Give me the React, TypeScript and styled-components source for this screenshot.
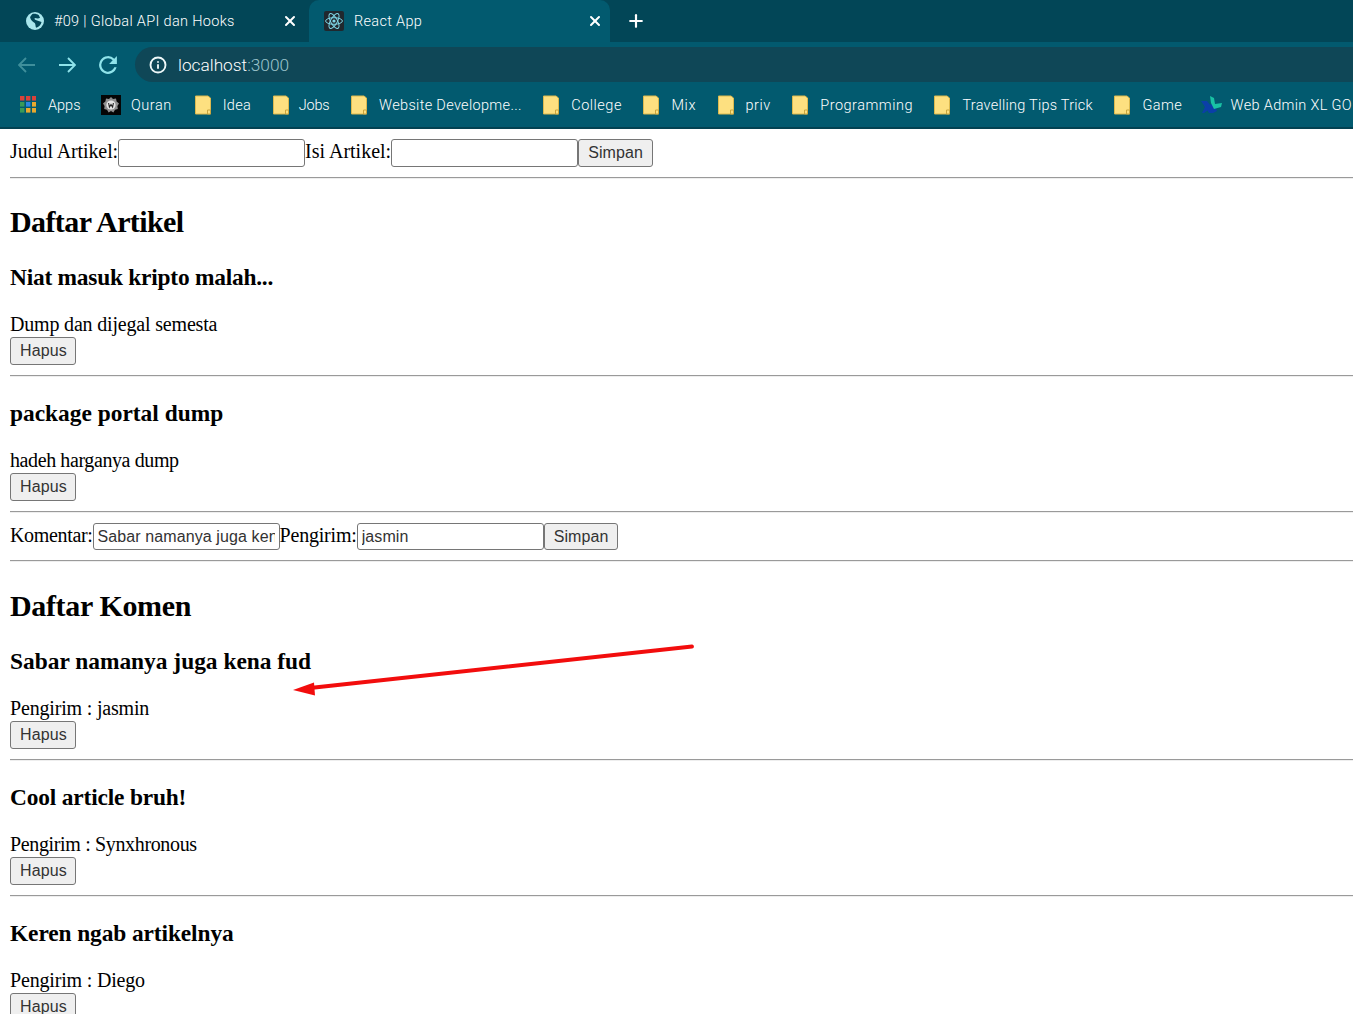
import styled, { createGlobalStyle } from "styled-components";
import { Info, X, Plus } from "lucide-react";

const bookmarkFolders = [
  { name: "Idea", spacing: 0.33, pull: -1.5 },
  { name: "Jobs", spacing: -0.15, gap: 10 },
  { name: "Website Developme...", spacing: 0.33 },
  { name: "College", spacing: 0.5 },
  { name: "Mix", spacing: 0.6 },
  { name: "priv", spacing: 0.5 },
  { name: "Programming", spacing: 0.5 },
  { name: "Travelling Tips Trick", spacing: 0.25 },
  { name: "Game", spacing: 0.4 },
];

const articles = [
  { title: "Niat masuk kripto malah...", body: "Dump dan dijegal semesta", titleSpacing: -0.23, bodySpacing: -0.18 },
  { title: "package portal dump", body: "hadeh harganya dump", titleSpacing: 0, bodySpacing: -0.4 },
];

const comments = [
  { title: "Sabar namanya juga kena fud", body: "Pengirim : jasmin", titleSpacing: 0, bodySpacing: -0.18 },
  { title: "Cool article bruh!", body: "Pengirim : Synxhronous", titleSpacing: -0.17, bodySpacing: -0.35 },
  { title: "Keren ngab artikelnya", body: "Pengirim : Diego", titleSpacing: -0.1, bodySpacing: -0.18 },
];

const GlobeIcon = () => (
  <svg width="18" height="18" viewBox="0 0 18 18">
    <circle cx="9" cy="9" r="9" fill="#a9e6ec" />
    <path
      d="M6 2.2 C8 1.6 10.5 1.8 12 2.8 L13.5 5 C12 6.5 10 6 8.5 6 C7.5 7 9 8 11 8.2 L15.6 9 C15.5 12 13.5 14.5 11 15.6 C10 14 10.2 12.2 9 11 C7 10.5 4.5 8.5 3.6 6 C4 4.6 5 3 6 2.2 Z"
      fill="#024657"
      transform="rotate(8 9 9)"
    />
  </svg>
);

const ReactIcon = () => (
  <svg width="20" height="20" viewBox="0 0 20 20">
    <rect width="20" height="20" rx="2" fill="#20282e" />
    <g fill="none" stroke="#7fd6e6" strokeWidth="1">
      <ellipse cx="10" cy="10" rx="8.4" ry="3.3" />
      <ellipse cx="10" cy="10" rx="8.4" ry="3.3" transform="rotate(60 10 10)" />
      <ellipse cx="10" cy="10" rx="8.4" ry="3.3" transform="rotate(120 10 10)" />
    </g>
    <circle cx="10" cy="10" r="1.6" fill="#7fd6e6" />
  </svg>
);

const AppsIcon = () => {
  const colors = ["#d9423a", "#d9423a", "#d9423a", "#3a9b57", "#2d86e0", "#e8a92e", "#3a9b57", "#e8a92e", "#e8a92e"];
  return (
    <svg width="16" height="17" viewBox="0 0 16 17">
      {colors.map((c, i) => (
        <rect key={i} x={(i % 3) * 6} y={Math.floor(i / 3) * 6} width="4.4" height="4.6" fill={c} />
      ))}
    </svg>
  );
};

const QuranIcon = () => (
  <svg width="20" height="20" viewBox="0 0 20 20">
    <rect width="20" height="20" fill="#050505" />
    <path
      d="M10 2 L12 4 L15 3.6 L15.6 6.6 L18 8.6 L16.4 11 L16.8 14 L14 14.8 L12.4 17.4 L10 16 L7.6 17.4 L6 14.8 L3.2 14 L3.6 11 L2 8.6 L4.4 6.6 L5 3.6 L8 4 Z"
      fill="#8f8f8f"
    />
    <circle cx="10" cy="10" r="4.6" fill="#e4e4e4" />
    <path d="M7.6 8 L8.4 12 L10 9.6 L11.6 12 L12.4 8" fill="none" stroke="#222" strokeWidth="1.1" />
  </svg>
);

const FolderIcon = () => (
  <svg width="16" height="20" viewBox="0 0 16 20">
    <path d="M0.5 1 H13 L15.5 3 V19 H0.5 Z" fill="#fde080" stroke="#dcb94f" />
    <path d="M12.5 15 H15.5 V19 H12.5 Z" fill="#fde080" stroke="#c9a53e" />
  </svg>
);

const XlIcon = () => (
  <svg width="21" height="20" viewBox="0 0 21 20">
    <path d="M0 6 H6 L9 10 L12 8 L16 16 L12 18 H8 L6.5 15.5 L3 18 H1 L4 12 Z" fill="#0b3fa8" />
    <path d="M9 1 L13 3 L14 9 L21 8 L20 12 L13 14 L10 8 Z" fill="#19c2a4" />
  </svg>
);

const ArrowIcon = ({ flip, color }: { flip?: boolean; color: string }) => (
  <svg width="18" height="16" viewBox="0 0 18 16" fill="none" stroke={color} strokeWidth="1.9">
    <path d={flip ? "M17 8 H1 M8 1 L1 8 L8 15" : "M1 8 H17 M10 1 L17 8 L10 15"} />
  </svg>
);

const ReloadIcon = () => (
  <svg width="20" height="20" viewBox="3 3 18 18" fill="#8fe3ea">
    <path d="M17.65 6.35A8 8 0 1 0 19.73 14h-2.08A6 6 0 1 1 12 6c1.66 0 3.14.69 4.22 1.78L13 11h7V4l-2.35 2.35z" />
  </svg>
);

export default function App() {
  return (
    <>
      <GlobalStyle />
      <Browser>
        <TabStrip>
          <InactiveTab>
            <GlobeIcon />
            <TabTitle>#09 | Global API dan Hooks</TabTitle>
            <X size={16} strokeWidth={3} color="#fff" />
          </InactiveTab>
          <ActiveTab>
            <ReactIcon />
            <TabTitle>React App</TabTitle>
            <X size={16} strokeWidth={3} color="#fff" />
          </ActiveTab>
          <NewTab>
            <Plus size={20} strokeWidth={2.6} color="#fff" />
          </NewTab>
        </TabStrip>
        <Toolbar>
          <NavButtons>
            <ArrowIcon flip color="#3f8f9b" />
            <ArrowIcon color="#8fe3ea" />
            <ReloadIcon />
          </NavButtons>
          <Omnibox>
            <Info size={18} color="#eef8f9" strokeWidth={2.5} />
            <Url>
              localhost<UrlPort>:3000</UrlPort>
            </Url>
          </Omnibox>
        </Toolbar>
        <Bookmarks>
          <Bookmark>
            <AppsIcon />
            <BookmarkLabel $spacing={0}>Apps</BookmarkLabel>
          </Bookmark>
          <Bookmark $gap={10} $pull={1}>
            <QuranIcon />
            <BookmarkLabel $spacing={0.5}>Quran</BookmarkLabel>
          </Bookmark>
          {bookmarkFolders.map((f) => (
            <Bookmark key={f.name} $gap={f.gap} $pull={f.pull}>
              <FolderIcon />
              <BookmarkLabel $spacing={f.spacing}>{f.name}</BookmarkLabel>
            </Bookmark>
          ))}
          <Bookmark $gap={9} $pull={3}>
            <XlIcon />
            <BookmarkLabel $spacing={0.33}>Web Admin XL GO</BookmarkLabel>
          </Bookmark>
        </Bookmarks>
      </Browser>

      <Page>
        <FormRow>
          <Label $spacing={-0.1}>Judul Artikel:</Label>
          <TextInput type="text" defaultValue="" />
          <Label $spacing={0}>Isi Artikel:</Label>
          <TextInput type="text" defaultValue="" />
          <ActionButton type="button">Simpan</ActionButton>
        </FormRow>
        <Rule />
        <Heading $spacing={-0.6}>Daftar Artikel</Heading>
        {articles.map((a) => (
          <section key={a.title}>
            <EntryTitle $spacing={a.titleSpacing}>{a.title}</EntryTitle>
            <EntryBody $spacing={a.bodySpacing}>{a.body}</EntryBody>
            <ActionButton type="button">Hapus</ActionButton>
            <Rule />
          </section>
        ))}
        <FormRow $offset={0.4}>
          <Label $spacing={-0.33}>Komentar:</Label>
          <TextInput type="text" defaultValue="Sabar namanya juga kena fud" />
          <Label $spacing={-0.2}>Pengirim:</Label>
          <TextInput type="text" defaultValue="jasmin" />
          <ActionButton type="button">Simpan</ActionButton>
        </FormRow>
        <Rule />
        <Heading $spacing={-0.35} $top={26.6} $bottom={24.8}>Daftar Komen</Heading>
        {comments.map((c) => (
          <section key={c.title}>
            <EntryTitle $spacing={c.titleSpacing}>{c.title}</EntryTitle>
            <EntryBody $spacing={c.bodySpacing}>{c.body}</EntryBody>
            <ActionButton type="button">Hapus</ActionButton>
            <Rule />
          </section>
        ))}
      </Page>

      <Arrow width="410" height="56" viewBox="0 0 410 56">
        <path d="M402 2.5 L20 44" stroke="#f20d0d" strokeWidth="3.8" strokeLinecap="round" fill="none" />
        <path d="M3 46 L24 38.5 L25 51.5 Z" fill="#f20d0d" />
      </Arrow>
    </>
  );
}

const GlobalStyle = createGlobalStyle`
  html, body {
    margin: 0;
    height: 100%;
    overflow: hidden;
    background: #fff;
  }
`;

const Browser = styled.div`
  display: flex;
  flex-direction: column;
  height: 129px;
  background: #025a6f;
  border-bottom: 2px solid #034252;
  box-sizing: border-box;
  overflow: hidden;
  font-family: "Roboto", "Liberation Sans", sans-serif;
  font-weight: 300;
  color: #fff;
`;

const TabStrip = styled.div`
  display: flex;
  align-items: stretch;
  height: 42px;
  background: #024657;
`;

const InactiveTab = styled.div`
  display: flex;
  align-items: center;
  width: 309px;
  padding: 0 11px 0 26px;
  box-sizing: border-box;
`;

const ActiveTab = styled(InactiveTab)`
  width: 301px;
  padding-left: 15px;
  padding-right: 7px;
  background: #025a6f;
  border-radius: 10px 10px 0 0;
`;

const TabTitle = styled.span`
  flex: 1;
  margin-left: 10px;
  font-size: 14.5px;
  letter-spacing: 0.32px;
  white-space: nowrap;
`;

const NewTab = styled.div`
  display: flex;
  align-items: center;
  padding-left: 16px;
`;

const Toolbar = styled.div`
  display: flex;
  align-items: flex-end;
  height: 40px;
`;

const NavButtons = styled.div`
  display: flex;
  align-items: center;
  align-self: center;
  gap: 22px;
  width: 135px;
  padding: 5px 0 0 18px;
  box-sizing: border-box;
`;

const Omnibox = styled.div`
  flex: 1;
  display: flex;
  align-items: center;
  gap: 11px;
  height: 35px;
  padding-left: 14px;
  background: #0f4757;
  border-radius: 18px 0 0 18px;
`;

const Url = styled.span`
  font-size: 17.3px;
  color: #fff;
`;

const UrlPort = styled.span`
  color: #9cc4cc;
`;

const Bookmarks = styled.div`
  flex: 1;
  display: flex;
  align-items: center;
  gap: 21.5px;
  padding-left: 20px;
  white-space: nowrap;
`;

const Bookmark = styled.div<{ $gap?: number; $pull?: number }>`
  display: flex;
  align-items: center;
  flex: none;
  gap: ${(p) => p.$gap ?? 12}px;
  margin-left: ${(p) => -(p.$pull ?? 0)}px;
`;

const BookmarkLabel = styled.span<{ $spacing: number }>`
  padding-top: 1px;
  font-size: 14.5px;
  letter-spacing: ${(p) => p.$spacing}px;
`;

const Page = styled.main`
  padding: 10px 0 0 10px;
  font-family: "Liberation Serif", "Times New Roman", serif;
  font-size: 20px;
  color: #000;
`;

const FormRow = styled.form<{ $offset?: number }>`
  margin-top: ${(p) => p.$offset ?? 0}px;
`;

const Label = styled.label<{ $spacing: number }>`
  letter-spacing: ${(p) => p.$spacing}px;
`;

const TextInput = styled.input`
  width: 187px;
  height: 27.5px;
  padding: 1px 4px;
  box-sizing: border-box;
  border: 1px solid #767676;
  border-radius: 3px;
  font-family: "Liberation Sans", Arial, sans-serif;
  font-size: 16px;
  letter-spacing: 0.1px;
  color: #333;
`;

const ActionButton = styled.button`
  height: 27.5px;
  padding: 1px 8.6px 1px 9px;
  box-sizing: border-box;
  border: 1px solid #767676;
  border-radius: 3px;
  background: #efefef;
  font-family: "Liberation Sans", Arial, sans-serif;
  font-size: 16px;
  letter-spacing: 0.1px;
  color: #333;
`;

const Rule = styled.hr`
  margin: 10px 0;
  border: none;
  border-top: 1px solid #9a9a9a;
  border-bottom: 1px solid #eee;
`;

const Heading = styled.h2<{ $spacing: number; $top?: number; $bottom?: number }>`
  margin: ${(p) => p.$top ?? 26}px 0 ${(p) => p.$bottom ?? 25.3}px;
  font-size: 30px;
  font-weight: 700;
  letter-spacing: ${(p) => p.$spacing}px;
`;

const EntryTitle = styled.h3<{ $spacing: number }>`
  margin: 22.7px 0;
  font-size: 23.4px;
  font-weight: 700;
  letter-spacing: ${(p) => p.$spacing}px;
`;

const EntryBody = styled.div<{ $spacing: number }>`
  height: 24px;
  line-height: 23px;
  letter-spacing: ${(p) => p.$spacing}px;
`;

const Arrow = styled.svg`
  position: absolute;
  left: 290px;
  top: 644px;
`;
